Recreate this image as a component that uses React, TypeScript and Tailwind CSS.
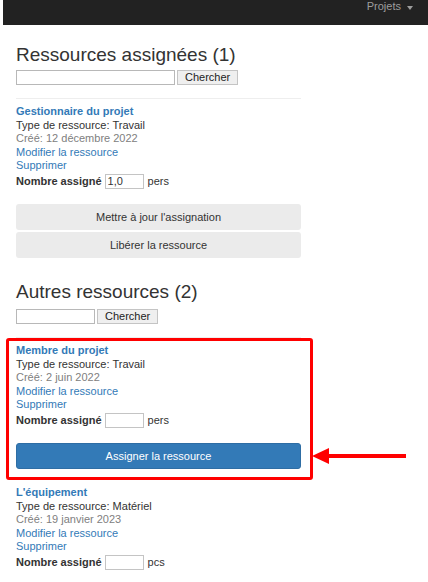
type Resource = {
  name: string;
  kind: string;
  created: string;
  value: string;
  unit: string;
};

const assigned: Resource[] = [
  { name: "Gestionnaire du projet", kind: "Travail", created: "12 décembre 2022", value: "1,0", unit: "pers" },
];

function SearchRow({ width }: { width: string }) {
  return (
    <div className="flex items-center gap-[2px] h-[15px]">
      <input className={`${width} h-[15px] border border-[#b8b8b8] bg-white px-[2px] text-[11px] outline-none`} />
      <button className="h-[15px] px-[7px] border border-[#c4c4c4] bg-[#efefef] text-[11px] leading-[13px] text-[#222]">
        Chercher
      </button>
    </div>
  );
}

function ResourceInfo({ r }: { r: Resource }) {
  return (
    <>
      <hr className="border-0 border-t border-[#eeeeee] mb-[6px]" />
      <div className="text-[11px] leading-[13.6px]">
        <div className="font-bold text-[#337ab7]">{r.name}</div>
        <div className="text-[#333]">Type de ressource: {r.kind}</div>
        <div className="text-[#808080]">Créé: {r.created}</div>
        <div className="text-[#337ab7]">Modifier la ressource</div>
        <div className="text-[#337ab7]">Supprimer</div>
        <div className="mt-[1px] flex items-center h-[15px] text-[#333]">
          <span className="font-bold">Nombre assigné</span>
          <input
            defaultValue={r.value}
            className="ml-[3px] w-[39px] h-[15px] border border-[#c4c4c4] bg-white px-[2px] text-[11px] leading-[13px] outline-none"
          />
          <span className="ml-[4px]">{r.unit}</span>
        </div>
      </div>
    </>
  );
}

export default function App() {
  return (
    <div className="h-[582px] overflow-hidden bg-white font-['Liberation_Sans',Arial,sans-serif] text-[#333]">
      {/* top bar */}
      <div className="ml-[3px] h-[25px] bg-[#222222] flex justify-end pr-[15px]">
        <div className="flex items-start gap-[6px] text-[11px] leading-[13.6px] text-[#9d9d9d]">
          <span>Projets</span>
          <span className="mt-[6px] w-0 h-0 border-l-[3px] border-r-[3px] border-t-[4px] border-l-transparent border-r-transparent border-t-[#9d9d9d]" />
        </div>
      </div>

      <div className="pl-[16px] w-[301px]">
        <h2 className="mt-[19px] mb-[5px] text-[19px] leading-[21px] font-normal">Ressources assignées (1)</h2>
        <SearchRow width="w-[159px]" />

        {assigned.map((r) => (
          <div key={r.name} className="mt-[13px]">
            <ResourceInfo r={r} />
            <div className="mt-[15px] flex flex-col gap-[2px]">
              <button className="h-[26px] rounded-[3px] bg-[#ebebeb] text-[11px] text-[#333]">
                Mettre à jour l'assignation
              </button>
              <button className="h-[26px] rounded-[3px] bg-[#ebebeb] text-[11px] text-[#333]">
                Libérer la ressource
              </button>
            </div>
          </div>
        ))}

        <h2 className="mt-[23px] mb-[7px] text-[19px] leading-[21px] font-normal">Autres ressources (2)</h2>
        <SearchRow width="w-[79px]" />

        <div className="relative mt-[13px]">
          <ResourceInfo r={{ name: "Membre du projet", kind: "Travail", created: "2 juin 2022", value: "", unit: "pers" }} />
          <button className="mt-[15px] w-full h-[26px] rounded-[3px] bg-[#337ab7] border border-[#2e6da4] text-[11px] text-white">
            Assigner la ressource
          </button>

          {/* highlight annotation */}
          <div className="absolute top-[1px] left-[-10px] right-[-12px] bottom-[-11px] border-[3px] border-[#ff0000] rounded-[3px] pointer-events-none" />
          <svg className="absolute left-[295px] top-[110px]" width="96" height="18" viewBox="0 0 96 18">
            <polygon points="1,9 18,1 18,17" fill="#ff0000" />
            <rect x="17" y="7" width="78" height="4" fill="#ff0000" />
          </svg>
        </div>

        <div className="mt-[10px]">
          <ResourceInfo r={{ name: "L'équipement", kind: "Matériel", created: "19 janvier 2023", value: "", unit: "pcs" }} />
        </div>
      </div>
    </div>
  );
}
